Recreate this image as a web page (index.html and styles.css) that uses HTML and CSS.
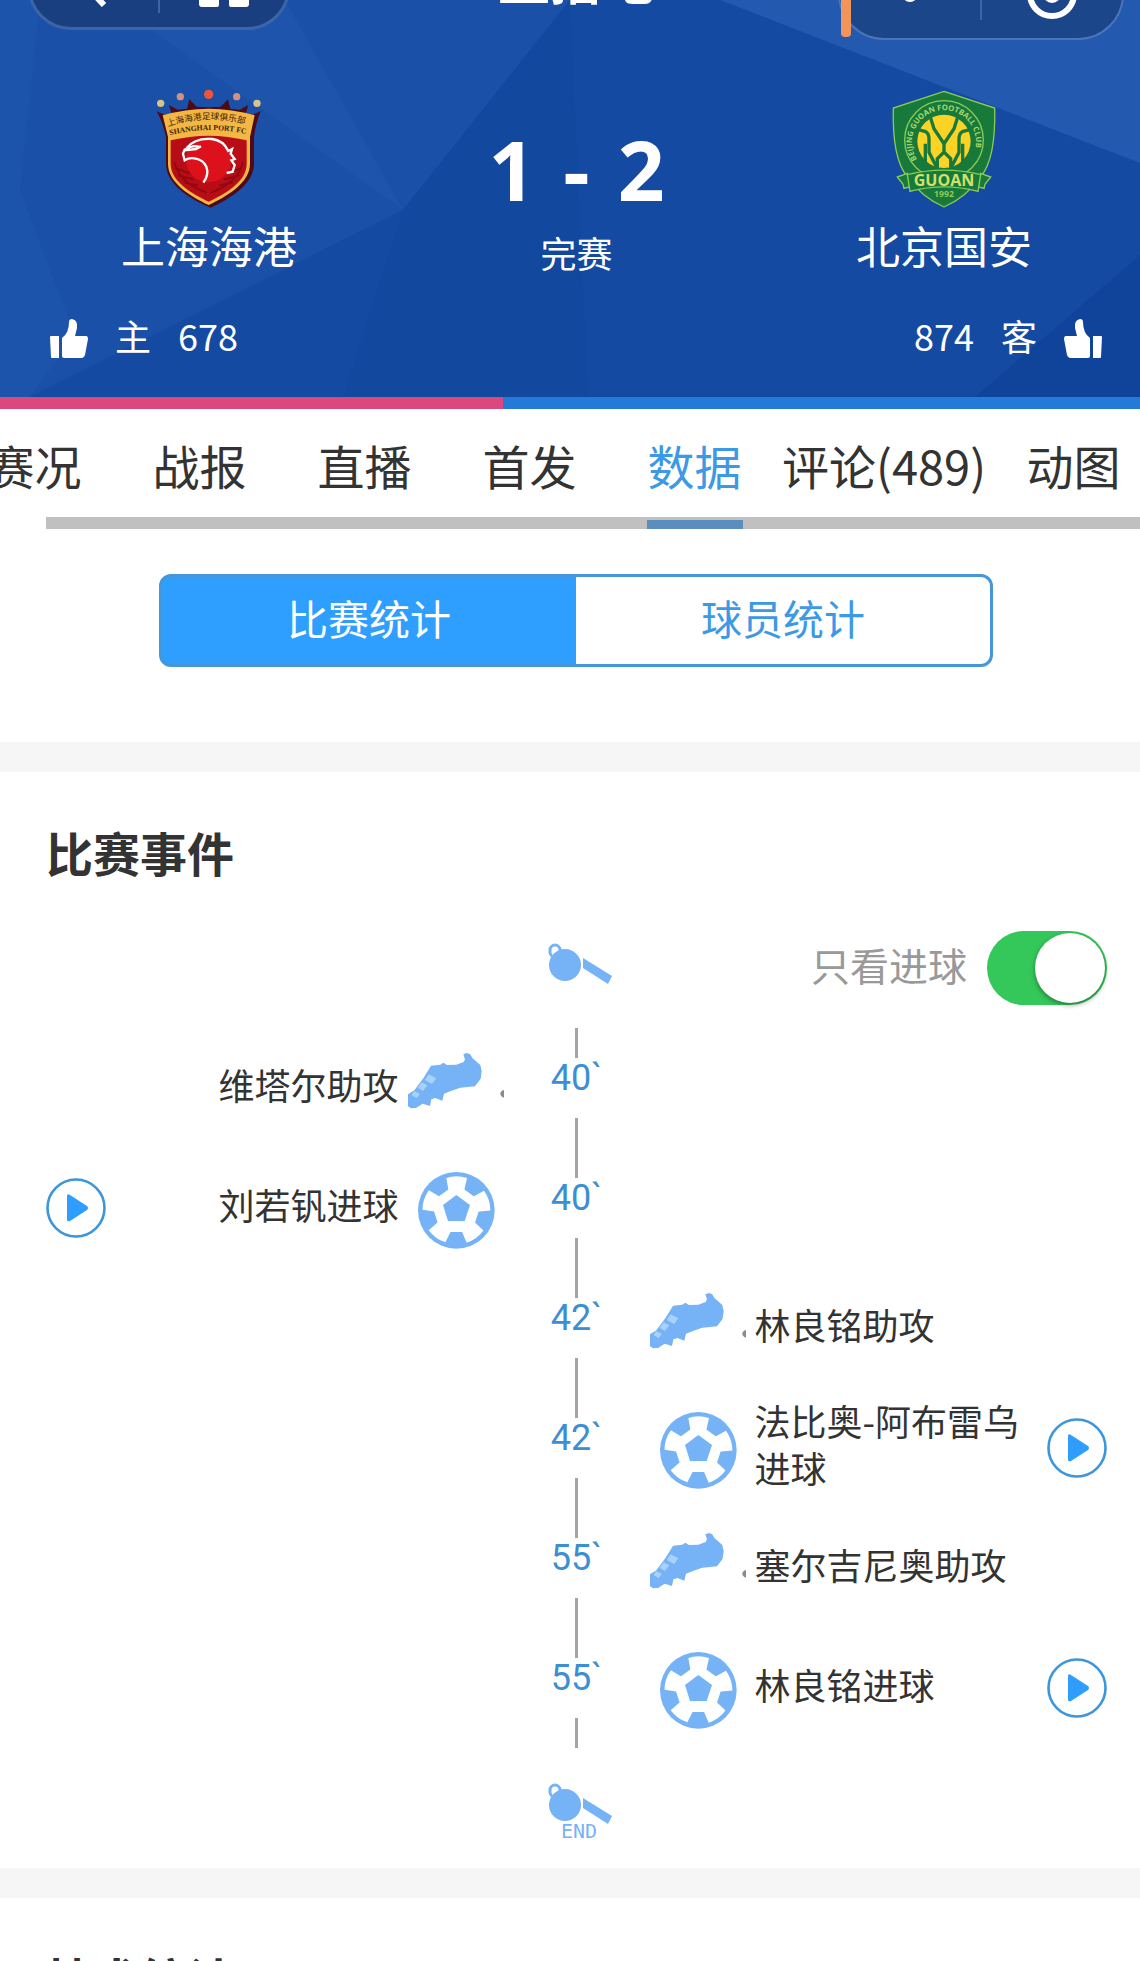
FILE: index.html
```
<!DOCTYPE html>
<html lang="zh-CN">
<head>
  <meta charset="UTF-8" />
  <meta name="viewport" content="width=device-width, initial-scale=1.0" />
  <title>上海海港 1 - 2 北京国安</title>
  <link rel="stylesheet" href="styles.css">
</head>
<body>
  <!-- Shared icons -->
  <svg class="sprite" aria-hidden="true">
    <symbol id="thumb" viewBox="0 0 38 39">
      <path d="M1 17h8v22H2q-1 0-1-1L0 18q0-1 1-1zM12 19q7-5 7-16 0-3 3-3 6 1 5 9l-2 8h11q2 0 2 3l-3 16q-1 3-3 3H14q-2 0-2-2z" fill="#fff"/>
    </symbol>
    <symbol id="boot" viewBox="81 27 288 288">
      <path d="M81 190L100 178 128 140 150 104 178 101 187 95 198 102 226 101 248 93 252 85 247 70 257 66 267 69 275 82 298 102 302 120 299 143 282 166 238 170 212 179 189 188 184 209 163 201 151 205 147 225 125 218 105 231 90 232 81 226Z" fill="#75b3f6"/>
      <path d="M143 130l23 12-13 17-22-12zM122 154l17 9-13 17-16-10zM99 180l18 9-10 12-15-8z" fill="#a9d1fb"/>
      <path d="M369 177q-11 3-11 11t11 12z" fill="#8b8b8b"/>
    </symbol>
    <symbol id="ball" viewBox="81 387 288 288">
      <circle cx="226" cy="538" r="115" fill="#75b3f6"/>
      <g fill="#fff">
        <path d="M226 458l76 55-29 90h-94l-29-90z"/>
        <path id="arm" d="M196 441q30-10 62 0l-9 40h-46z"/>
        <use href="#arm" transform="rotate(72 226 538)"/>
        <use href="#arm" transform="rotate(144 226 538)"/>
        <use href="#arm" transform="rotate(216 226 538)"/>
        <use href="#arm" transform="rotate(288 226 538)"/>
      </g>
      <path d="M226 492l41 30-16 48h-50l-15-48z" fill="#75b3f6"/>
    </symbol>
    <symbol id="play" viewBox="0 0 60 60">
      <circle cx="30" cy="30" r="28.5" fill="none" stroke="#3b96dc" stroke-width="2.6"/>
      <path d="M21 18q0-3 3-1l17 11q2 2 0 4L24 43q-3 1-3-1z" fill="#2e9dfd"/>
    </symbol>
    <symbol id="whistle" viewBox="-7 -7 72 64">
      <rect x="2" y="2" width="10" height="12" rx="5" fill="none" stroke="#75b3f6" stroke-width="3"/>
      <circle cx="17" cy="22" r="16" fill="#75b3f6"/>
      <path d="M35 15l29 18-4 8-25-16z" fill="#75b3f6"/>
    </symbol>
  </svg>

  <header class="match">
    <svg class="facets" viewBox="0 0 1140 397" preserveAspectRatio="none" aria-hidden="true">
      <path d="M0 0h570L403 210 30 397H0z" fill="#1a50a8"/>
      <path d="M110 0h175l118 210z" fill="#1e54ab"/>
      <path d="M0 0h40L20 190l55 145-45 62H0z" fill="#1c53ab"/>
      <path d="M570 0L403 210l-60 187h245z" fill="#13489f"/>
      <path d="M720 0h420v163z" fill="#2459b0"/>
      <path d="M1140 255v142H975z" fill="#10449b"/>
    </svg>

    <div class="topbar">
      <div class="pill">
        <button class="pill-button" aria-label="返回">
          <svg width="24" height="40" viewBox="0 0 24 40"><path d="M21 2L4 20l17 18" fill="none" stroke="#fff" stroke-width="6"/></svg>
        </button>
        <button class="pill-button" aria-label="首页">
          <svg width="50" height="40" viewBox="0 0 50 40"><path d="M0 16L25 0l25 16v21q0 3-3 3H32q-2 0-2-2V26H20v12q0 2-2 2H3q-3 0-3-3z" fill="#fff"/></svg>
        </button>
      </div>
      <div class="app-name">直播吧</div>
      <div class="pill pill-right">
        <button class="pill-button" aria-label="更多">
          <svg width="60" height="16" viewBox="0 0 60 16"><g fill="#fff"><circle cx="6" cy="8" r="5"/><circle cx="30" cy="8" r="8"/><circle cx="54" cy="8" r="5"/></g></svg>
        </button>
        <button class="pill-button" aria-label="关闭">
          <svg width="52" height="52" viewBox="0 0 52 52"><circle cx="26" cy="26" r="22" fill="none" stroke="#fff" stroke-width="6"/><circle cx="26" cy="26" r="9" fill="#fff"/></svg>
        </button>
      </div>
      <span class="marker"></span>
    </div>

    <div class="scoreboard">
      <div class="team">
        <svg class="crest" viewBox="45 20 324 366" role="img" aria-label="上海海港">
          <circle cx="62" cy="69" r="11" fill="#d8c489"/>
          <circle cx="121" cy="49" r="11" fill="#d69080"/>
          <circle cx="206" cy="42" r="14" fill="#e9573a"/>
          <circle cx="290" cy="49" r="11" fill="#d69080"/>
          <circle cx="351" cy="69" r="11" fill="#d8c489"/>
          <path d="M50 93l24 10 20-5-7-24 26 14 28-3 7-28 22 22 36 2 36-2 22-22 7 28 28 3 26-14-7 24 20 5 24-10q-16 40-20 77v80c0 62-74 106-130 132C150 356 78 312 78 250v-80Q68 125 50 93z" fill="#4d0a19"/>
          <path d="M68 105q138-40 276 0l-14 65v80c0 58-70 98-124 124C152 348 84 308 84 250v-80z" fill="#f4b742"/>
          <path d="M92 180q114-28 228 0v70c0 54-64 90-114 114C156 340 92 304 92 250z" fill="#b80c16"/>
          <circle cx="206" cy="238" r="68" fill="#dc111b"/>
          <path d="M103 245q14 62 97 92M309 245q-14 62-97 92M106 262l44 18M114 285l46 12M134 307l40 8M306 262l-44 18M298 285l-46 12M278 307l-40 8" fill="none" stroke="#8e0910" stroke-width="5"/>
          <path d="M180 200q-20-8-46 8l-5 12 5 20q15-10 34-5 22 5 31 24 9 24-9 48M140 203q24-31 76-27 34 4 49 36l11-6-4 14 12 16-10 4 10 14-6 20-18 4M133 210l35-4 15-8" fill="none" stroke="#fff" stroke-width="7"/>
          <path id="port-cn" d="M84 139q122-42 246-3" fill="none"/>
          <path id="port-en" d="M90 165q116-31 236-2" fill="none"/>
          <text class="crest-cn"><textPath href="#port-cn">上海海港足球俱乐部</textPath></text>
          <text class="crest-en"><textPath href="#port-en">SHANGHAI PORT FC</textPath></text>
        </svg>
        <div class="team-name">上海海港</div>
      </div>

      <div class="result">
        <div class="score"><span>1</span><span>-</span><span>2</span></div>
        <div class="status">完赛</div>
      </div>

      <div class="team">
        <svg class="crest" viewBox="58 20 324 366" role="img" aria-label="北京国安">
          <path d="M220 33l152 50q4 150-41 205-43 62-111 92-68-30-111-92-45-55-41-205z" fill="#17793a" stroke="#8ccb58" stroke-width="4"/>
          <circle cx="220" cy="179" r="118" fill="none" stroke="#8ccb58" stroke-width="4"/>
          <circle cx="220" cy="183" r="80" fill="#fbd324"/>
          <path d="M178 107l12 38 30 45 30-45 12-38M220 190v25M135 146l30 8q10 6 10 22v40l23 45M305 146l-30 8q-10 6-10 22v40l-23 45M164 190v70M276 190v70M200 262v-27l20-20 20 20v27" fill="none" stroke="#17793a" stroke-width="10"/>
          <path d="M80 290l30-11 8 40-18 5-3-12zM360 290l-30-11-8 40 18 5 3-12z" fill="#17793a" stroke="#8ccb58" stroke-width="4"/>
          <path d="M110 283q110-27 220 0l-8 50q-102-27-204 0z" fill="#17793a" stroke="#8ccb58" stroke-width="4"/>
          <path id="guoan-ring" d="M139 237a96 96 0 1 1 162 0" fill="none"/>
          <text class="crest-ring"><textPath href="#guoan-ring">BEIJING GUOAN FOOTBALL CLUB</textPath></text>
          <text class="crest-guoan" x="220" y="317">GUOAN</text>
          <text class="crest-year" x="220" y="349">1992</text>
        </svg>
        <div class="team-name">北京国安</div>
      </div>
    </div>

    <div class="votes">
      <button class="vote"><svg width="38" height="39"><use href="#thumb"/></svg><span>主</span><span>678</span></button>
      <button class="vote vote-away"><svg width="38" height="39"><use href="#thumb"/></svg><span>客</span><span>874</span></button>
    </div>
  </header>

  <div class="vote-bar"><div class="vote-bar-home" style="width: 44.1%"></div></div>

  <nav class="tabs">
    <a class="tab" href="#">赛况</a>
    <a class="tab" href="#">战报</a>
    <a class="tab" href="#">直播</a>
    <a class="tab" href="#">首发</a>
    <a class="tab active" href="#"><span>数据</span></a>
    <a class="tab" href="#">评论(489)</a>
    <a class="tab" href="#">动图</a>
  </nav>

  <main>
    <div class="segments">
      <button class="segment selected">比赛统计</button>
      <button class="segment">球员统计</button>
    </div>

    <section class="panel">
      <h2>比赛事件</h2>

      <div class="row">
        <div class="time"><svg width="72" height="64"><use href="#whistle"/></svg></div>
        <div class="filter">
          <label for="goalsOnly">只看进球</label>
          <input type="checkbox" id="goalsOnly" class="switch" checked />
        </div>
      </div>

      <div class="row">
        <div class="event home"><svg class="icon"><use href="#boot"/></svg><span class="text">维塔尔助攻</span></div>
        <div class="time">40`</div>
      </div>
      <div class="row">
        <div class="event home"><svg class="icon"><use href="#ball"/></svg><span class="text">刘若钒进球</span><button class="play" aria-label="播放"><svg width="60" height="60"><use href="#play"/></svg></button></div>
        <div class="time">40`</div>
      </div>
      <div class="row">
        <div class="time">42`</div>
        <div class="event"><svg class="icon"><use href="#boot"/></svg><span class="text">林良铭助攻</span></div>
      </div>
      <div class="row">
        <div class="time">42`</div>
        <div class="event"><svg class="icon"><use href="#ball"/></svg><span class="text">法比奥-阿布雷乌进球</span><button class="play" aria-label="播放"><svg width="60" height="60"><use href="#play"/></svg></button></div>
      </div>
      <div class="row">
        <div class="time">55`</div>
        <div class="event"><svg class="icon"><use href="#boot"/></svg><span class="text">塞尔吉尼奥助攻</span></div>
      </div>
      <div class="row">
        <div class="time">55`</div>
        <div class="event"><svg class="icon"><use href="#ball"/></svg><span class="text">林良铭进球</span><button class="play" aria-label="播放"><svg width="60" height="60"><use href="#play"/></svg></button></div>
      </div>

      <div class="row">
        <div class="time"><svg class="whistle-end" width="72" height="64"><use href="#whistle"/><text class="end-text" x="38" y="62">END</text></svg></div>
      </div>
    </section>

    <section class="panel">
      <h2>技术统计</h2>
    </section>
  </main>
</body>
</html>
```

FILE: styles.css
```
* {
  box-sizing: border-box;
}

body {
  margin: 0;
  height: 100vh;
  overflow: hidden;
  font-family: "Noto Sans CJK SC", sans-serif;
  font-size: 36px;
  color: #333;
  background: #fff;
}

button {
  margin: 0;
  padding: 0;
  border: none;
  background: none;
  font: inherit;
  color: inherit;
  cursor: pointer;
}

svg {
  display: block;
  flex: none;
}

.sprite {
  position: absolute;
  width: 0;
  height: 0;
}

/* Match header */
.match {
  position: relative;
  overflow: hidden;
  padding-bottom: 31px;
  color: #fff;
  background: #144aa1;
}

.facets {
  position: absolute;
  top: 0;
  left: 0;
  width: 100%;
  height: 100%;
}

.topbar {
  position: relative;
  display: grid;
  grid-template-columns: 1fr auto 1fr;
  align-items: end;
  height: 100px;
  margin-top: -60px;
  padding: 0 16px 0 28px;
}

.pill {
  display: flex;
  align-items: center;
  width: 262px;
  height: 86px;
  margin-bottom: 10px;
  border: 3px solid #3c65a8;
  border-radius: 43px;
  background: #193f80;
}

.pill-right {
  justify-self: end;
  width: 286px;
  height: 92px;
  margin-bottom: 0;
  border: 2px solid #4b75b8;
  border-radius: 46px;
  background: #1c468a;
}

.pill-button {
  flex: 1;
  display: flex;
  justify-content: center;
  align-items: center;
  height: 52px;
}

.pill-button + .pill-button {
  border-left: 2px solid #3c65a8;
}

.app-name {
  margin-bottom: 26px;
  font-size: 52px;
  font-weight: bold;
  line-height: 72px;
}

.marker {
  position: absolute;
  right: 289px;
  bottom: 3px;
  width: 10px;
  height: 60px;
  border-radius: 4px;
  background: #f1955a;
}

.scoreboard {
  position: relative;
  display: flex;
  margin-top: 47px;
  padding: 0 33px 0 46px;
  text-align: center;
}

.team {
  width: 326px;
}

.crest {
  width: 108px;
  height: 122px;
  margin: 0 auto;
}

.crest-cn {
  font-size: 26px;
  fill: #3a2310;
}

.crest-en {
  font-family: "Liberation Serif", serif;
  font-size: 23px;
  font-weight: bold;
  fill: #3a2310;
}

.crest-ring {
  font-family: "Open Sans", sans-serif;
  font-size: 23px;
  font-weight: bold;
  fill: #a9d86a;
}

.crest-guoan {
  font-family: "Open Sans", sans-serif;
  font-size: 48px;
  font-weight: bold;
  text-anchor: middle;
  fill: #d3e06a;
}

.crest-year {
  font-family: "Open Sans", sans-serif;
  font-size: 26px;
  font-weight: bold;
  text-anchor: middle;
  fill: #8ccb58;
}

.team-name {
  font-size: 44px;
  line-height: 72px;
}

.result {
  flex: 1;
  padding-top: 24px;
}

.score {
  display: flex;
  justify-content: center;
  gap: 28px;
  font-family: "Open Sans", sans-serif;
  font-size: 82px;
  font-weight: bold;
  line-height: 116px;
}

.status {
  line-height: 50px;
}

.votes {
  position: relative;
  display: flex;
  justify-content: space-between;
  margin-top: 29px;
  padding: 0 38px 0 50px;
}

.vote {
  display: flex;
  align-items: center;
  gap: 27px;
}

.vote span {
  padding-bottom: 6px;
  line-height: 50px;
}

.vote-away {
  flex-direction: row-reverse;
}

.vote-away svg {
  transform: scaleX(-1);
}

.vote-bar {
  height: 12px;
  background: #247ad6;
}

.vote-bar-home {
  height: 100%;
  background: #dc477d;
}

/* Tabs, with the grey track along the bottom */
.tabs {
  display: flex;
  height: 120px;
  overflow: hidden;
  background: linear-gradient(#c0c0c0, #c0c0c0) 46px 100% / 100% 12px no-repeat;
}

.tab {
  flex: none;
  min-width: 165px;
  padding: 0 5px;
  font-size: 47px;
  line-height: 111px;
  text-align: center;
  text-decoration: none;
  color: #333;
}

.tab:first-child {
  margin-left: -48px;
}

.tab.active {
  color: #3b99e6;
}

.tab.active span {
  display: block;
  width: 96px;
  margin: 0 auto;
  border-bottom: 9px solid #5b8dbd;
}

.segments {
  display: flex;
  margin: 45px 147px 75px 159px;
  border: 3px solid #4797d8;
  border-radius: 12px;
  background: linear-gradient(90deg, #2e9ffe 50%, #fff 50%);
  overflow: hidden;
}

.segment {
  flex: 1;
  padding-bottom: 6px;
  font-size: 41px;
  line-height: 81px;
  color: #3b99e6;
}

.segment.selected {
  color: #fff;
  background: #2e9ffe;
}

/* Panels */
.panel {
  padding: 44px 33px 0 46px;
  border-top: 30px solid #f6f6f6;
}

h2 {
  margin: 0 0 20px;
  font-size: 47px;
  font-weight: bold;
  line-height: 72px;
}

.row {
  display: grid;
  grid-template-columns: 1fr 96px 1fr;
  align-items: center;
  height: 120px;
}

.time {
  grid-column: 2;
  grid-row: 1;
  display: flex;
  flex-direction: column;
  align-items: center;
  font-family: Roboto, sans-serif;
  line-height: 40px;
  color: #3b8fd2;
}

.row:has(.event) .time {
  height: 120px;
  padding: 30px 0;
  background:
    linear-gradient(#a5a5a5, #a5a5a5) top / 3px 30px no-repeat,
    linear-gradient(#a5a5a5, #a5a5a5) bottom / 3px 30px no-repeat;
}

.event {
  grid-column: 3;
  grid-row: 1;
  display: flex;
  align-items: center;
  gap: 9px;
  padding-left: 25px;
  line-height: 47px;
}

.event.home {
  grid-column: 1;
  flex-direction: row-reverse;
  padding: 0 25px 0 0;
}

.event.home .text {
  text-align: right;
}

.icon {
  width: 96px;
  height: 96px;
}

.text {
  flex: 1;
  padding-bottom: 8px;
}

.filter {
  grid-column: 3;
  display: flex;
  justify-content: flex-end;
  align-items: center;
  gap: 20px;
  font-size: 39px;
  color: #999;
}

.filter label {
  padding-bottom: 8px;
}

.switch {
  appearance: none;
  display: flex;
  width: 120px;
  height: 74px;
  margin: 0;
  padding: 2px;
  border-radius: 37px;
  background: #ccc;
}

.switch::before {
  content: "";
  width: 70px;
  height: 70px;
  border-radius: 50%;
  background: #fff;
  box-shadow: 0 2px 5px rgba(0, 0, 0, 0.4);
}

.switch:checked {
  justify-content: flex-end;
  background: #34c85a;
}

.whistle-end {
  overflow: visible;
}

.end-text {
  font-family: "DejaVu Sans Mono", monospace;
  font-size: 20px;
  text-anchor: middle;
  fill: #75b3f6;
}
```
